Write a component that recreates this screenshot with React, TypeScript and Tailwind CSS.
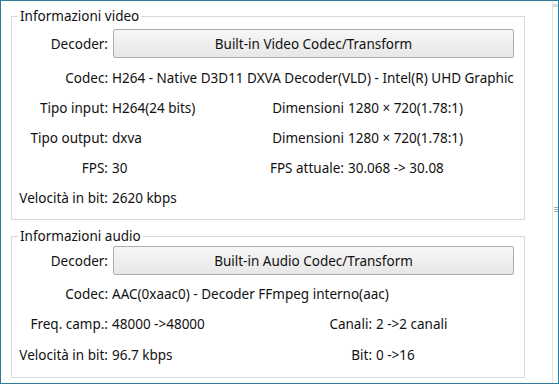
import React from "react";

function Btn({ children }: { children: React.ReactNode }) {
  return (
    <div className="ml-[5px] w-[401px] h-[29px] flex items-center justify-center border border-[#adadad] rounded-[2px] bg-linear-to-b from-[#f7f7f7] to-[#e7e7e7]">
      {children}
    </div>
  );
}

function L({ children }: { children: React.ReactNode }) {
  return <span className="w-[96px] shrink-0 text-right whitespace-nowrap">{children}</span>;
}

function V({ children }: { children: React.ReactNode }) {
  return <span className="ml-[4px] whitespace-nowrap">{children}</span>;
}

export default function App() {
  return (
    <div className="w-[559px] h-[384px] bg-white border border-[#2c7c9b] flex overflow-hidden font-['Noto_Sans',sans-serif] text-[13.5px] leading-[16px] text-[#111]">
      <div className="w-[551px] h-full flex flex-col pl-[10px]">
        {/* Video */}
        <fieldset className="mt-[7px] w-[514px] h-[212px] border border-[#d9d9d9] flex flex-col">
          <legend className="ml-[6px] px-[2px] leading-[16px]">Informazioni video</legend>
          <div className="mt-[5px] flex items-center">
            <L>Decoder:</L>
            <Btn>Built-in Video Codec/Transform</Btn>
          </div>
          <div className="mt-[5px] h-[30px] flex items-center">
            <L>Codec:</L>
            <span className="ml-[4px] w-[408px] whitespace-nowrap overflow-hidden">
              H264 - Native D3D11 DXVA Decoder(VLD) - Intel(R) UHD Graphic
            </span>
          </div>
          <div className="h-[30px] flex items-center">
            <div className="w-[248px] flex">
              <L>Tipo input:</L>
              <V>H264(24 bits)</V>
            </div>
            <span className="w-[84px] text-right whitespace-nowrap">Dimensioni</span>
            <V>1280 × 720(1.78:1)</V>
          </div>
          <div className="h-[30px] flex items-center">
            <div className="w-[248px] flex">
              <L>Tipo output:</L>
              <V>dxva</V>
            </div>
            <span className="w-[84px] text-right whitespace-nowrap">Dimensioni</span>
            <V>1280 × 720(1.78:1)</V>
          </div>
          <div className="h-[30px] flex items-center">
            <div className="w-[248px] flex">
              <L>FPS:</L>
              <V>30</V>
            </div>
            <span className="w-[84px] text-right whitespace-nowrap">FPS attuale:</span>
            <V>30.068 -&gt; 30.08</V>
          </div>
          <div className="h-[30px] flex items-center">
            <L>Velocità in bit:</L>
            <V>2620 kbps</V>
          </div>
        </fieldset>

        {/* Audio */}
        <fieldset className="mt-[8px] w-[514px] h-[150px] border border-[#d9d9d9] flex flex-col">
          <legend className="ml-[6px] px-[2px] leading-[16px]">Informazioni audio</legend>
          <div className="mt-[2px] flex items-center">
            <L>Decoder:</L>
            <Btn>Built-in Audio Codec/Transform</Btn>
          </div>
          <div className="mt-[4px] h-[30px] flex items-center">
            <L>Codec:</L>
            <V>AAC(0xaac0) - Decoder FFmpeg interno(aac)</V>
          </div>
          <div className="h-[30px] flex items-center">
            <div className="w-[278px] flex">
              <L>Freq. camp.:</L>
              <V>48000 -&gt;48000</V>
            </div>
            <span className="w-[82px] text-right whitespace-nowrap">Canali:</span>
            <V>2 -&gt;2 canali</V>
          </div>
          <div className="mt-[1px] h-[30px] flex items-center">
            <div className="w-[278px] flex">
              <L>Velocità in bit:</L>
              <V>96.7 kbps</V>
            </div>
            <span className="w-[82px] text-right whitespace-nowrap">Bit:</span>
            <V>0 -&gt;16</V>
          </div>
        </fieldset>
      </div>

      {/* right splitter strip */}
      <div className="relative w-[6px] h-full border-l border-[#e3e3e3]">
        <div className="absolute left-0 right-0 top-[3px] h-[3px] bg-[#dadada]" />
        <div className="absolute left-[1px] w-[4px] top-[206px] flex flex-col gap-[1px]">
          <div className="h-px bg-[#a8a8a8]" />
          <div className="h-px bg-[#a8a8a8]" />
          <div className="h-px bg-[#a8a8a8]" />
        </div>
      </div>
    </div>
  );
}
